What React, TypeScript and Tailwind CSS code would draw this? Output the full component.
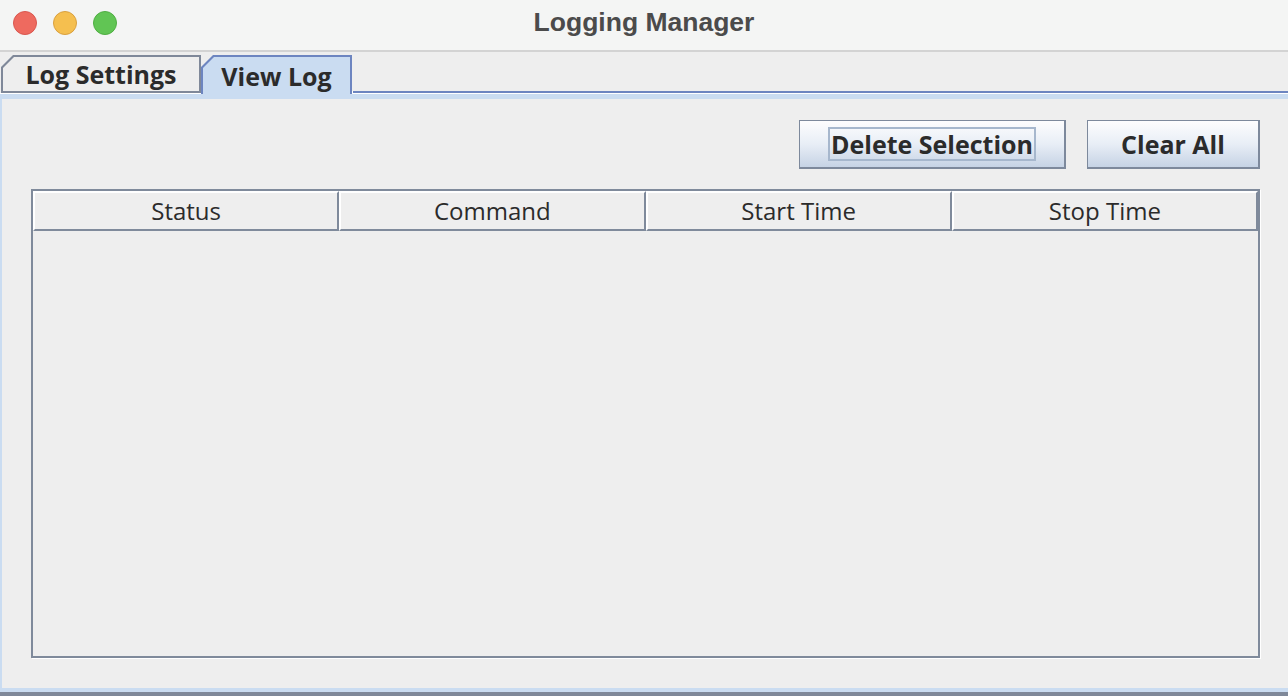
import React from "react";

const ui = { fontFamily: '"Open Sans", "DejaVu Sans", sans-serif' };

const Tab = ({ label, selected }: { label: string; selected?: boolean }) => {
  return (
    <div
      className={
        selected
          ? "relative z-10 -mb-[1px] h-[39px] w-[151px] bg-[#6d85c0] pl-[2px] pr-[2px] pt-[2px] [clip-path:polygon(12px_0,100%_0,100%_100%,0_100%,0_12px)]"
          : "h-[38px] w-[200px] bg-[#7f8899] pl-[2px] pr-[2px] pt-[2px] pb-[2px] [clip-path:polygon(12px_0,100%_0,100%_100%,0_100%,0_12px)]"
      }
    >
      <div
        className={
          "flex h-full items-center justify-center text-[25px] font-bold text-[#2b2b2b] [clip-path:polygon(11px_0,100%_0,100%_100%,0_100%,0_11px)] " +
          (selected ? "bg-[#cadcf1] pt-[3px]" : "bg-[#eeeeee] pt-[1px]")
        }
        style={ui}
      >
        {label}
      </div>
    </div>
  );
};

const Button = ({ label, width, focused }: { label: string; width: string; focused?: boolean }) => {
  return (
    <button
      className={
        "flex h-[49px] items-center justify-center border border-b-2 border-r-2 border-[#7d899c] bg-gradient-to-b from-[#fdfdfe] via-[#e8eef6] to-[#c6d3e5] text-[25px] font-bold text-[#2b2b2b] " +
        width
      }
      style={ui}
    >
      <span className={focused ? "border-2 border-[#a6b7cd] px-[1px] leading-[30px]" : "leading-[30px]"}>{label}</span>
    </button>
  );
};

const columns = ["Status", "Command", "Start Time", "Stop Time"];

export default function App() {
  return (
    <div className="flex h-[696px] w-[1288px] flex-col overflow-hidden bg-[#eeeeee]">
      {/* title bar */}
      <div className="relative flex h-[52px] items-center justify-center border-b-2 border-[#d3d3d3] bg-[#f4f5f4]">
        <div className="absolute left-[13px] top-[11px] flex gap-[16px]">
          <span className="h-[24px] w-[24px] rounded-full border border-[#d9574f] bg-[#ee6a5f]" />
          <span className="h-[24px] w-[24px] rounded-full border border-[#d9a03f] bg-[#f5bf4f]" />
          <span className="h-[24px] w-[24px] rounded-full border border-[#4fae42] bg-[#61c554]" />
        </div>
        <span
          className="pb-[4px] text-[26.5px] font-bold text-[#4b4b4b]"
          style={{ fontFamily: '"Liberation Sans", Arial, sans-serif' }}
        >
          Logging Manager
        </span>
      </div>

      {/* tabs */}
      <div className="flex h-[41px] items-end pl-[1px] pt-[3px]">
        <Tab label="Log Settings" />
        <Tab label="View Log" selected />
        <div className="h-[2px] flex-1 border-l border-white bg-[#6d85c0]" />
      </div>
      <div className="h-[1px] bg-white" />
      <div className="h-[5px] bg-[#cadcf1]" />

      {/* content */}
      <div className="flex flex-1 flex-col border-l-2 border-[#cadcf1] pl-[29px] pr-[28px] pt-[21px]">
        <div className="flex justify-end gap-[21px]">
          <Button label="Delete Selection" width="w-[267px]" focused />
          <Button label="Clear All" width="w-[173px]" />
        </div>

        <div className="mt-[20px] flex h-[469px] flex-col border-2 border-[#7f8a9b] shadow-[1px_1px_0_#ffffff]">
          <div className="grid h-[40px] grid-cols-4">
            {columns.map((c) => (
              <div
                key={c}
                className="flex items-center justify-center border-2 border-l-white border-t-white border-b-[#7f8a9b] border-r-[#7f8a9b] text-[24px] text-[#2b2b2b]"
                style={ui}
              >
                {c}
              </div>
            ))}
          </div>
          <div className="flex-1 bg-[#eeeeee]" />
        </div>
      </div>

      {/* bottom edge */}
      <div className="h-[4px] bg-[#cadcf1]" />
      <div className="h-[4px] bg-[#7f8899]" />
    </div>
  );
}
